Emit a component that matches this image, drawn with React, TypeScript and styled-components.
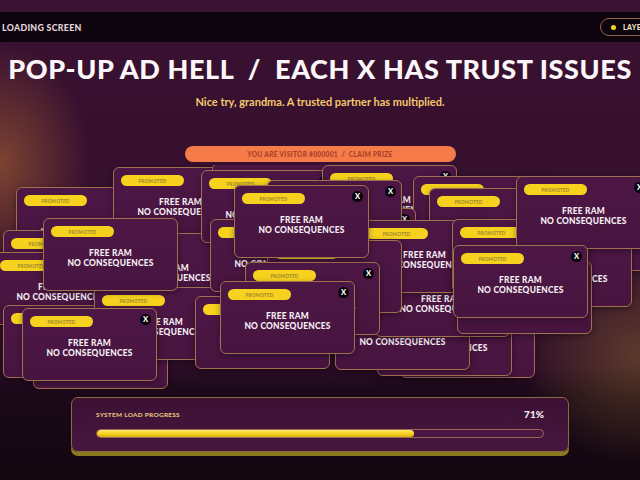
import React from "react";
import styled, { createGlobalStyle } from "styled-components";

const GlobalStyle = createGlobalStyle`
  html, body {
    margin: 0;
    padding: 0;
    width: 640px;
    height: 480px;
    overflow: hidden;
    background: #12060f;
  }
  * { box-sizing: border-box; }
`;

const Page = styled.div`
  width: 640px;
  height: 480px;
  overflow: hidden;
  display: flex;
  flex-direction: column;
  font-family: Lato, "Open Sans", sans-serif;
  background:
    radial-gradient(ellipse 90px 120px at 0% 34%, rgba(196, 118, 52, 0.5), transparent),
    radial-gradient(ellipse 120px 110px at 100% 74%, rgba(150, 112, 48, 0.45), transparent),
    linear-gradient(to bottom, #3a1131 0%, #36102e 40%, #2e0d28 76%, #1b0919 82%, #12060f 100%);
`;

const TopStrip = styled.div`
  height: 12px;
  background: #3a1232;
`;

const NavBar = styled.header`
  height: 30px;
  background: #0e040d;
  display: flex;
  align-items: center;
  justify-content: space-between;
  padding-left: 2px;
  overflow: hidden;
`;

const Brand = styled.span`
  font-size: 8.8px;
  font-weight: 900;
  letter-spacing: 0.3px;
  color: #e2d4de;
`;

const LayerPill = styled.div`
  flex-shrink: 0;
  margin-right: -34px;
  height: 18px;
  width: 74px;
  border: 1px solid #8e6448;
  border-radius: 9px;
  display: flex;
  align-items: center;
  gap: 7px;
  padding-left: 10px;
  font-size: 7px;
  font-weight: 900;
  letter-spacing: 0.4px;
  color: #f2e4c6;
`;

const Dot = styled.span`
  width: 5px;
  height: 5px;
  border-radius: 50%;
  background: #f5d21e;
`;

const Title = styled.h1`
  margin: 13px 0 0;
  text-align: center;
  white-space: pre;
  font-size: 27px;
  line-height: 28px;
  font-weight: 900;
  letter-spacing: 0.6px;
  color: #fbf6f8;
`;

const Subtitle = styled.p`
  margin: 12px 0 0;
  text-align: center;
  font-size: 11px;
  line-height: 14px;
  font-weight: 700;
  color: #f3c96c;
`;

const PrizeBar = styled.div`
  margin: 37px auto 0;
  width: 271px;
  height: 16px;
  border-radius: 8px;
  background: #f57b48;
  display: flex;
  align-items: center;
  justify-content: center;
  white-space: pre;
  font-size: 6.6px;
  font-weight: 900;
  letter-spacing: 0.3px;
  color: #a8412b;
`;

const Stage = styled.div`
  position: relative;
  height: 225px;
  margin-top: 3px;
  overflow: hidden;
`;

const Popup = styled.div`
  position: absolute;
  width: 135px;
  height: 73px;
  padding: 7px;
  border: 1px solid #a0704f;
  border-radius: 6px;
  background: linear-gradient(to bottom, #4d1745, #47143f);
  box-shadow: 0 2px 6px rgba(0, 0, 0, 0.35);
  display: flex;
  flex-direction: column;
  align-items: center;
`;

const Promoted = styled.span`
  align-self: flex-start;
  width: 63px;
  height: 11px;
  border-radius: 6px;
  background: #f6d21f;
  display: flex;
  align-items: center;
  justify-content: center;
  font-size: 4.6px;
  font-weight: 700;
  letter-spacing: 0.2px;
  color: #9c8430;
`;

const Message = styled.div`
  margin-top: 11px;
  text-align: center;
  font-size: 8.4px;
  line-height: 10px;
  font-weight: 900;
  letter-spacing: 0.25px;
  color: #f6eff4;
  white-space: nowrap;
`;

const Close = styled.span`
  position: absolute;
  top: 5px;
  right: 5px;
  width: 11px;
  height: 11px;
  border-radius: 50%;
  background: #07030a;
  color: #ffffff;
  display: flex;
  align-items: center;
  justify-content: center;
  font-size: 7.5px;
  font-weight: 900;
`;

const ProgressPanel = styled.section`
  margin: 7px auto 0;
  width: 498px;
  height: 55px;
  border: 1px solid #8c6a40;
  border-radius: 7px;
  background: linear-gradient(to bottom, #3c1134, #47163f);
  box-shadow: 0 4px 0 #8c7a1e;
  padding: 11px 24px 0;
  display: flex;
  flex-direction: column;
`;

const ProgressHead = styled.div`
  display: flex;
  justify-content: space-between;
  align-items: center;
  height: 10px;
`;

const ProgressLabel = styled.span`
  font-size: 6.4px;
  font-weight: 900;
  letter-spacing: 0.3px;
  color: #e6c27c;
`;

const ProgressValue = styled.span`
  font-size: 10px;
  font-weight: 900;
  color: #f6eef2;
`;

const Track = styled.div`
  margin-top: 10px;
  height: 9px;
  border: 1px solid #9a6a58;
  border-radius: 5px;
  background: #4b1542;
  overflow: hidden;
`;

const Fill = styled.div`
  height: 100%;
  border-radius: 5px;
  background: linear-gradient(to bottom, #ffe96a, #f5cf1c 55%, #d9ad12);
`;

type PopupSpec = { x: number; y: number; close?: boolean };

// the popup stage begins at page y = 165; specs below use page coordinates
const STAGE_TOP = 165;

const POPUPS: PopupSpec[] = [
  { x: 16, y: 187 },
  { x: 3, y: 230 },
  { x: -8, y: 252 },
  { x: 113, y: 167 },
  { x: 212, y: 163 },
  { x: 100, y: 233 },
  { x: 3, y: 305 },
  { x: 33, y: 316 },
  { x: 94, y: 287 },
  { x: 201, y: 170, close: true },
  { x: 322, y: 165, close: true },
  { x: 413, y: 176 },
  { x: 429, y: 188 },
  { x: 281, y: 208, close: true },
  { x: 210, y: 219 },
  { x: 267, y: 180, close: true },
  { x: 530, y: 198 },
  { x: 497, y: 234 },
  { x: 400, y: 305 },
  { x: 377, y: 303 },
  { x: 335, y: 297 },
  { x: 375, y: 264 },
  { x: 457, y: 261 },
  { x: 357, y: 220 },
  { x: 452, y: 219 },
  { x: 267, y: 240 },
  { x: 195, y: 296 },
  { x: 245, y: 262, close: true },
  { x: 43, y: 218 },
  { x: 516, y: 176, close: true },
  { x: 234, y: 185, close: true },
  { x: 453, y: 245, close: true },
  { x: 220, y: 281, close: true },
  { x: 22, y: 308, close: true },
];

const PROGRESS = 71;

export default function App() {
  return (
    <>
      <GlobalStyle />
      <Page>
        <TopStrip />
        <NavBar>
          <Brand>LOADING SCREEN</Brand>
          <LayerPill>
            <Dot />
            LAYERS
          </LayerPill>
        </NavBar>
        <Title>{"POP-UP AD HELL  /  EACH X HAS TRUST ISSUES"}</Title>
        <Subtitle>Nice try, grandma. A trusted partner has multiplied.</Subtitle>
        <PrizeBar>{"YOU ARE VISITOR #000001  /  CLAIM PRIZE"}</PrizeBar>
        <Stage>
          {POPUPS.map((p, i) => (
            <Popup key={i} style={{ left: p.x, top: p.y - STAGE_TOP }}>
              <Promoted>PROMOTED</Promoted>
              <Message>
                FREE RAM
                <br />
                NO CONSEQUENCES
              </Message>
              {p.close && <Close>X</Close>}
            </Popup>
          ))}
        </Stage>
        <ProgressPanel>
          <ProgressHead>
            <ProgressLabel>SYSTEM LOAD PROGRESS</ProgressLabel>
            <ProgressValue>{PROGRESS}%</ProgressValue>
          </ProgressHead>
          <Track>
            <Fill style={{ width: `${PROGRESS}%` }} />
          </Track>
        </ProgressPanel>
      </Page>
    </>
  );
}
